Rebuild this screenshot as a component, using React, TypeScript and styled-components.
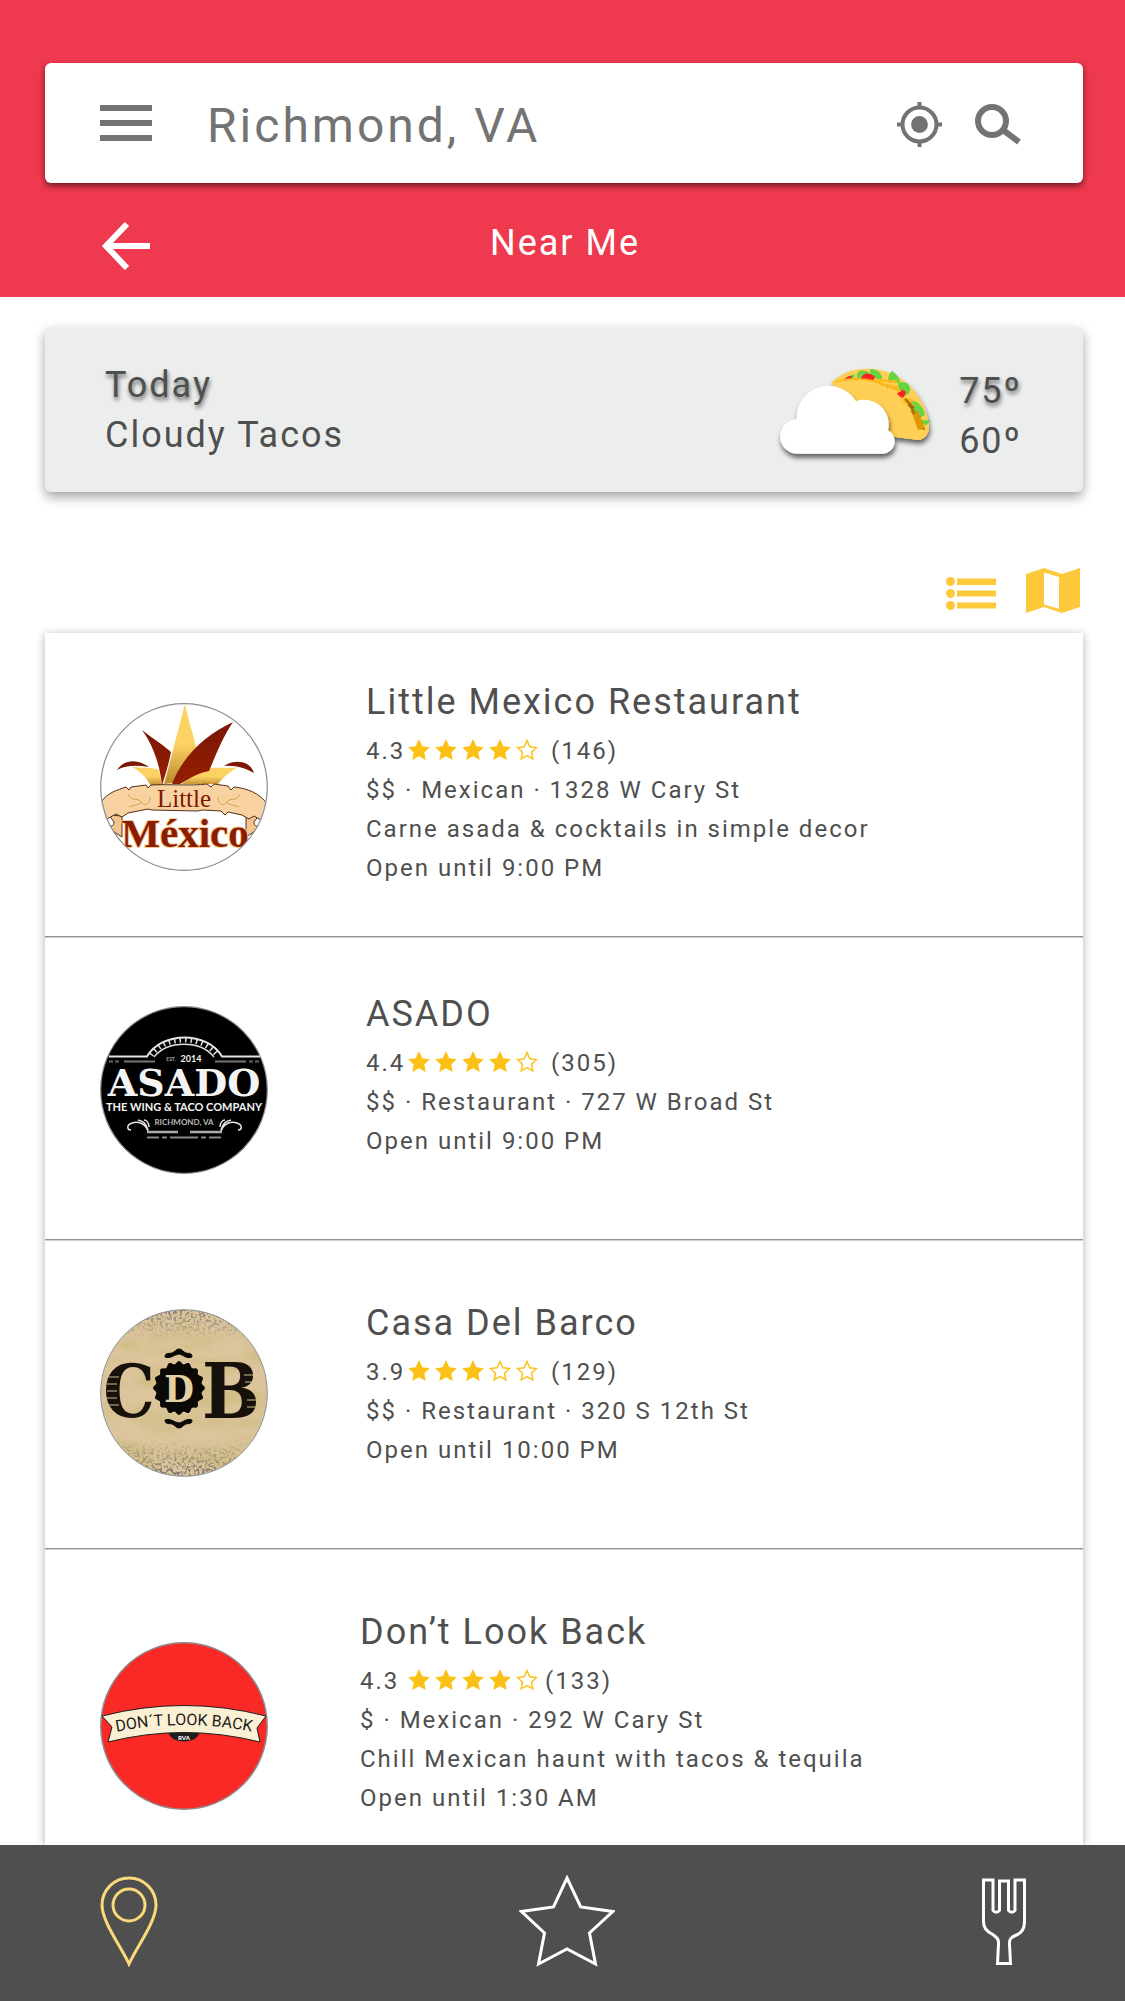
import React from "react";
import styled, { createGlobalStyle } from "styled-components";

const GlobalStyle = createGlobalStyle`
  *, *::before, *::after { box-sizing: border-box; }
  body {
    margin: 0;
    background: #ffffff;
    color: #4f4f4f;
    font-family: Roboto, "Noto Sans", sans-serif;
    letter-spacing: 2px;
  }
  h1, h2, p, ul { margin: 0; padding: 0; font-weight: 400; }
  ul { list-style: none; }
  svg { display: block; }
`;

const Screen = styled.div`
  display: flex;
  flex-direction: column;
  min-height: 100vh;
`;

const Header = styled.header`
  background: #ef394e;
  padding: 63px 42px 0 45px;
`;

const SearchBar = styled.form`
  display: flex;
  align-items: center;
  height: 120px;
  padding: 0 62px 0 55px;
  background: #ffffff;
  border-radius: 6px;
  box-shadow: 0 3px 6px rgba(0, 0, 0, 0.55);
  color: #737373;
`;

const SearchField = styled.input`
  flex: 1;
  min-width: 0;
  margin: 0 24px 0 55px;
  padding: 4px 0 0;
  border: 0;
  outline: 0;
  background: transparent;
  color: inherit;
  font-family: inherit;
  font-size: 48px;
  letter-spacing: 3px;
`;

const IconButton = styled.button`
  flex: none;
  padding: 0;
  border: 0;
  background: none;
  color: inherit;
  cursor: pointer;
`;

const SearchTools = styled.div`
  display: flex;
  align-items: center;
  gap: 33px;
  padding-top: 2px;
`;

const TitleRow = styled.div`
  display: grid;
  grid-template-columns: 1fr auto 1fr;
  align-items: center;
  height: 114px;
  padding: 6px 54px 0 56px;
  color: #ffffff;
`;

const BackButton = styled(IconButton)`
  justify-self: start;
`;

const PageTitle = styled.h1`
  font-size: 36px;
  line-height: 48px;
`;

const Main = styled.main`
  flex: 1;
  display: flex;
  flex-direction: column;
  padding: 30px 42px 0 45px;
`;

const Weather = styled.section`
  display: flex;
  align-items: center;
  justify-content: space-between;
  height: 165px;
  padding: 0 61px 0 60px;
  background: #eceeed;
  border-radius: 6px;
  box-shadow: 0 5px 12px rgba(0, 0, 0, 0.36);
  font-size: 36px;
  line-height: 50px;
`;

const Forecast = styled.div`
  display: flex;
  align-items: center;
  gap: 23px;
  padding-top: 12px;
`;

const Raised = styled.p`
  text-shadow: 1px 3px 4px rgba(0, 0, 0, 0.55);
`;

const ViewSwitch = styled.div`
  display: flex;
  justify-content: flex-end;
  align-items: center;
  gap: 30px;
  padding: 76px 3px 20px 0;
  color: #fcc93a;
`;

const List = styled.ul`
  flex: 1;
  background: #ffffff;
  box-shadow: 0 2px 9px rgba(0, 0, 0, 0.32);
`;

const Place = styled.li<{ $height: number }>`
  display: flex;
  align-items: flex-start;
  min-height: ${(p) => p.$height}px;
  padding: 0 55px;

  &:not(:last-child) {
    border-bottom: 1px solid #939393;
    box-shadow: 0 1px 0 #cfcfcf;
  }
`;

const Logo = styled.div<{ $top: number }>`
  flex: none;
  padding-top: ${(p) => p.$top}px;
`;

const Info = styled.div<{ $top: number; $indent: number }>`
  padding: ${(p) => p.$top}px 0 0 ${(p) => p.$indent}px;
  font-size: 24px;
  line-height: 39px;
`;

const Name = styled.h2`
  margin-bottom: 6px;
  font-size: 36px;
  line-height: 48px;
`;

const Rating = styled.div`
  display: flex;
  align-items: center;
`;

const Score = styled.span<{ $width: number }>`
  width: ${(p) => p.$width}px;
`;

const Stars = styled.span<{ $after: number }>`
  display: flex;
  gap: 5px;
  margin-right: ${(p) => p.$after}px;
`;

const BottomNav = styled.nav`
  position: relative;
  display: flex;
  align-items: center;
  justify-content: space-between;
  height: 156px;
  padding: 0 96px 4px 100px;
  background: #4f4f4f;
`;

const NavLink = styled.a<{ $active?: boolean }>`
  color: ${(p) => (p.$active ? "#fbd978" : "#ffffff")};
`;

const MenuIcon = () => (
  <svg width="52" height="36" viewBox="0 0 52 36" fill="currentColor">
    <path d="M0 0h52v6H0zM0 15h52v6H0zM0 30h52v6H0z" />
  </svg>
);

const LocateIcon = () => (
  <svg width="45" height="45" viewBox="0 0 45 45" fill="none" stroke="currentColor" strokeWidth="4">
    <circle cx="22.5" cy="22.5" r="17" />
    <circle cx="22.5" cy="22.5" r="8.4" fill="currentColor" stroke="none" />
    <path d="M22.5 0v6M22.5 39v6M0 22.5h6M39 22.5h6" />
  </svg>
);

const SearchIcon = () => (
  <svg width="46" height="42" viewBox="0 0 46 42" fill="none" stroke="currentColor" strokeWidth="6">
    <circle cx="17" cy="18" r="14" />
    <path d="M28 27l16 12" />
  </svg>
);

const BackIcon = () => (
  <svg width="50" height="54" viewBox="0 0 50 54" fill="none" stroke="currentColor" strokeWidth="6">
    <path d="M26 8L5 30l21 22M6 30h43" />
  </svg>
);

const ListIcon = () => (
  <svg width="50" height="45" viewBox="0 0 50 45" fill="currentColor">
    <circle cx="4.5" cy="13.500" r="4.5" />
    <circle cx="4.5" cy="25.500" r="4.5" />
    <circle cx="4.5" cy="37.500" r="4.5" />
    <path d="M11 10.500h39v6.600H11zM11 22.500h39v6H11zM11 34.500h39v6H11z" />
  </svg>
);

const MapIcon = () => (
  <svg width="54" height="45" viewBox="0 0 54 45" fill="currentColor" fillRule="evenodd">
    <path d="M0 6L18 0l18 6L54 0v39l-18 6-18-6-18 6zM18 4.500v32l15 4.300V9z" />
  </svg>
);

const starPath = "M11 0l3.300 7.300 7.500.9-5.500 5.300 1.400 7.500L11 17.200 4.300 21l1.400-7.500L.2 8.200l7.500-.9z";

const StarIcon = ({ filled }: { filled: boolean }) => (
  <svg width="22" height="25" viewBox="0 0 22 25">
    {filled ? (
      <path d={starPath} fill="#fcc117" />
    ) : (
      <path
        d="M11 1.500l2.800 6.200 6.700.8-5 4.700 1.300 6.700L11 16.600l-5.800 3.300 1.300-6.700-5-4.700 6.700-.8z"
        fill="none"
        stroke="#fcc117"
        strokeWidth="1.500"
      />
    )}
  </svg>
);

const TacoIcon = () => (
  <svg width="160" height="106" viewBox="0 0 160 106" role="img" aria-label="Cloud and taco">
    <defs>
      <filter id="lift" x="-20%" y="-20%" width="140%" height="150%">
        <feDropShadow dx="1" dy="4" stdDeviation="2.500" floodColor="#000" floodOpacity="0.6" />
      </filter>
    </defs>
    <g filter="url(#lift)">
      <path
        d="M55 20C66 9 80 5 94 5.800c20 1.200 38 11 48 27 7 11 10 21 11 30 .5 7-4 14-11 14L112 73z"
        fill="#ffcf55"
      />
    </g>
    <path
      d="M68 17c2-5 7-4 11-6l-1 5zM81 15c-1-8 4-9 12-6l-2 6zM94 6c8 0 13 5 12 11l-12-3zM111 19c2-4 1-8 5-11 6 4 8 8 8 12zM122 20c9-3 13 3 12 7-1 5-5 7-11 5zM132 37c8 0 15 5 17 15l-9 5zM143 57l12 .500-5 5z"
      fill="#68d444"
    />
    <path d="M68 18c2-5 6-5 8-5l-1 4zM85 16c2-8 10-6 14-2l-2 4zM109 21l4 1-1 3zM121 31c2-4 7-5 9-2l-3 7z" fill="#ff2222" />
    <path d="M58 20C72 14 94 15 109 22" stroke="#fcb716" strokeWidth="2" fill="none" />
    <path
      d="M99 18c8-3 12 2 22 0M103 21c8 0 11 4 20 3M113 22c4 6 8 1 11 7M126 35l11 3-8 1 9 4"
      stroke="#fbb91b"
      strokeWidth="2.500"
      fill="none"
    />
    <path
      d="M57 20c22-6 45-3 62 12 13 12 21 25 23 35 3 0 7-1 9-4 3 6-2 14-9 14L108 73z"
      fill="#ffcf55"
    />
    <path d="M129 36l9 9M132 41l6 7" stroke="#a8690c" strokeWidth="2" />
    <path d="M136 50l6-2 7 17-7 2z" fill="#dc9a00" />
    <path d="M144 66l5-1v2zM134 47l3 5 4-3" fill="#b9760a" />
    <g filter="url(#lift)">
      <path
        d="M22 90.700A17.200 17.200 0 0 1 20.700 56.300 32 32 0 0 1 80 38.200 24.600 24.600 0 0 1 112 67.300 12.400 12.400 0 0 1 107 90.700z"
        fill="#fff"
      />
    </g>
  </svg>
);

const PinIcon = () => (
  <svg width="58" height="92" viewBox="0 0 58 92" fill="none" stroke="currentColor" strokeWidth="3">
    <path d="M29 89C22 73 2 47 2 30a27 27 0 0 1 54 0c0 17-20 43-27 59z" />
    <circle cx="29" cy="30" r="16" />
  </svg>
);

const FavouriteIcon = () => (
  <svg width="96" height="92" viewBox="0 0 96 92" fill="none" stroke="currentColor" strokeWidth="3">
    <path d="M48 3l13.700 29 32 4.500L70.500 58l6 31L48 74 19.500 89l6-31L2.500 36.500l32-4.500z" />
  </svg>
);

const ForkIcon = () => (
  <svg width="54" height="92" viewBox="-4 0 54 92" fill="none" stroke="currentColor" strokeWidth="3">
    <path d="M4.500 5h9.500V35.500a4 4 0 0 0 6.500 0V6h9V35.500a4 4 0 0 0 6.500 0V5h9.500V47c0 7-3 11-8 13-5 2-7.500 4-7 9l1 19.500h-13L19.500 69c.5-5-2-7-6.500-10-6-3-8.500-7-8.500-12z" />
  </svg>
);

const LittleMexicoLogo = () => (
  <svg width="168" height="168" viewBox="0 0 168 168" role="img" aria-label="Little México">
    <defs>
      <clipPath id="lm-clip"><circle cx="84" cy="84" r="83" /></clipPath>
      <linearGradient id="lm-gold" x1="0" y1="0" x2="0" y2="1">
        <stop offset="0.500" stopColor="#fdd264" />
        <stop offset="1" stopColor="#b98a2c" />
      </linearGradient>
      <linearGradient id="lm-red" x1="0" y1="0" x2="0" y2="1">
        <stop offset="0" stopColor="#7a1606" />
        <stop offset="1" stopColor="#971f00" />
      </linearGradient>
    </defs>
    <circle cx="84" cy="84" r="83" fill="#fff" />
    <g clipPath="url(#lm-clip)">
      <path d="M32 64c10 1 20 0 27 3l3 16H51C46 74 40 68 32 64zM82 81c8-9 17-14 28-16 9-1 19 1 28-1-8 5-15 10-20 17z" fill="url(#lm-gold)" />
      <path d="M85 1c3 16 9 32 12 47L73 80l-9 1C72 52 78 27 85 1z" fill="url(#lm-gold)" />
      <path d="M42 27c10 8 20 14 29 22-2 12-6 23-9 34C60 62 53 42 42 27zM133 19C122 35 116 52 109 68c-12 2-22 9-29 13h-8C83 52 107 31 133 19z" fill="url(#lm-red)" />
      <path d="M17 67c8-12 22-10 32-3-12-2-23-2-32 3zM124 63c10-7 26-6 30 7-9-5-18-8-30-7z" fill="#7d1705" />
      <path d="M9 112l13 1v21l-14-9c3-3 6-1 6-6zM159 112l-13 1v21l14-9c-3-3-6-1-6-6z" fill="#f3c48b" stroke="#53301a" />
      <path
        d="M1 99C8 89 18 87 26 84l3 3 2-3 15-2 2 3 3-3c22-1 38 1 56-1l4 3 3-3 14 2 3 4 3-3c13 1 27 7 33 17l-6 16-7-4-5 3-7-4-14-3-3 3-4-4-18-1-6 1-45-1-4-1-20 4-6 4-6-3-9 5z"
        fill="#f8d2a0"
        stroke="#53301a"
      />
      <path d="M28 91c4 9 10 2 14 9 4 5 9-2 8-6M29 104c5-2 9-2 12-4M140 91c-4 9-10 2-14 9-4 5-9-2-8-6M139 104c-5-2-9-2-12-4" fill="none" stroke="#d7a14a" />
      <text x="84" y="104" textAnchor="middle" fontFamily="Liberation Serif, serif" fontSize="25" letterSpacing="0" fill="#7d1705">Little</text>
      <text
        x="85" y="144" textAnchor="middle" fontFamily="Liberation Serif, serif" fontSize="41" fontWeight="700" letterSpacing="0"
        fill="#8b1c04" stroke="#f5c98f" strokeWidth="2" paintOrder="stroke"
      >México</text>
    </g>
    <circle cx="84" cy="84" r="83.300" fill="none" stroke="#8c8c8c" strokeWidth="1.200" />
  </svg>
);

const AsadoLogo = () => (
  <svg width="168" height="168" viewBox="0 0 168 168" role="img" aria-label="Asado, the wing and taco company">
    <circle cx="84" cy="84" r="83.300" fill="#000" stroke="#8c8c8c" strokeWidth="1.200" />
    <g fill="none" stroke="#e4e4e4">
      <path d="M9 50.500h38C62 25 107 25 122 50.500h38" strokeWidth="2" />
      <path d="M54 51C68 34 100 34 114 51" strokeWidth="1.500" />
      <path d="M51 49C66 29 102 29 117 49" strokeWidth="5" strokeDasharray="1.500 4" />
      <path d="M24 55.500h31M115 55.500h31" strokeWidth="2" stroke="#777" />
      <path d="M9 55.500h12M149 55.500h10" strokeWidth="2" stroke="#666" strokeDasharray="4 2" />
      <path d="M47 126h31M90 126h32" strokeWidth="2.500" stroke="#aaa" />
      <path d="M47 131.500h12M70 131.500h28M109 131.500h12M62 131.500h5M101 131.500h5" strokeWidth="2" stroke="#888" />
      <path d="M48 125c-3-8-10-10-16-8-6 2-5 7-1 7M48 124c-2-7-5-9-10-10M49 121c0-5-3-7-5-7M121 125c3-8 10-10 16-8 6 2 5 7 1 7M121 124c2-7 5-9 10-10M120 121c0-5 3-7 5-7" strokeWidth="1.500" />
    </g>
    <g fill="#f4f4f4" textAnchor="middle" fontWeight="700" letterSpacing="0">
      <text x="71" y="55" fontFamily="Lato, sans-serif" fontSize="5" fill="#aaa">EST.</text>
      <text x="91" y="56" fontFamily="Lato, sans-serif" fontSize="9">2014</text>
      <text x="84" y="90" fontFamily="DejaVu Serif, serif" fontSize="38">ASADO</text>
      <text x="84" y="105" fontFamily="Lato, sans-serif" fontSize="11">THE WING &amp; TACO COMPANY</text>
      <text x="84" y="119" fontFamily="Lato, sans-serif" fontSize="8" fill="#bbb">RICHMOND, VA</text>
    </g>
  </svg>
);

const badgeEdge = Array.from({ length: 96 }, (_, i) => {
  const a = (i / 96) * Math.PI * 2;
  const r = 24.5 + 1.5 * Math.cos(a * 16);
  return `${(79 + r * Math.cos(a)).toFixed(1)},${(79 + (r + 1) * Math.sin(a)).toFixed(1)}`;
}).join(" ");

const CasaLogo = () => (
  <svg width="168" height="168" viewBox="0 0 168 168" role="img" aria-label="Casa Del Barco">
    <defs>
      <clipPath id="cdb-clip"><circle cx="84" cy="84" r="83" /></clipPath>
      <filter id="cdb-paper" x="0" y="0" width="100%" height="100%">
        <feTurbulence type="fractalNoise" baseFrequency="0.020 0.050" numOctaves="4" seed="4" />
        <feColorMatrix values="0 0 0 0 0.620  0 0 0 0 0.500  0 0 0 0 0.220  3 0 0 0 -1.150" />
      </filter>
      <filter id="cdb-grit" x="0" y="0" width="100%" height="100%">
        <feTurbulence type="fractalNoise" baseFrequency="0.350" numOctaves="3" seed="9" />
        <feColorMatrix values="0 0 0 0 0.220  0 0 0 0 0.200  0 0 0 0 0.180  0 8 0 0 -3.900" />
      </filter>
      <linearGradient id="cdb-fade" x1="0" y1="0" x2="0" y2="1">
        <stop offset="0" stopColor="#fff" />
        <stop offset="0.180" stopColor="#000" />
        <stop offset="0.780" stopColor="#000" />
        <stop offset="0.970" stopColor="#fff" />
      </linearGradient>
      <mask id="cdb-mask"><rect width="168" height="168" fill="url(#cdb-fade)" /></mask>
    </defs>
    <g clipPath="url(#cdb-clip)">
      <rect width="168" height="168" fill="#dcc59c" />
      <rect width="168" height="168" filter="url(#cdb-paper)" opacity="0.700" />
      <g mask="url(#cdb-mask)"><rect width="168" height="168" filter="url(#cdb-grit)" /></g>
    </g>
    <polygon points={badgeEdge} fill="#0b0905" />
    <path
      d="M65 48c0-5 5-3 7-4 3-1 4-4 7-4s4 3 7 4c2 1 6-1 6 4-6 2-8-2-13-3-6 1-8 5-14 3zM65 111c0 5 5 3 7 4 3 1 4 4 7 4s4-3 7-4c2-1 6 1 6-4-6-2-8 2-13 3-6-1-8-5-14-3z"
      fill="#0b0905"
      stroke="#0b0905"
    />
    <g fontFamily="DejaVu Serif Condensed, DejaVu Serif, serif" fontWeight="700" textAnchor="middle" letterSpacing="0">
      <text x="29" y="108" fontSize="72" fill="#16110a">C</text>
      <text x="131" y="109" fontSize="76" fill="#16110a">B</text>
      <text x="79" y="93" fontSize="38" fill="#e3cfa4">D</text>
    </g>
    <path d="M9 68h10M7 75h10M7 82h10M7 89h10M9 96h10M144 66h9M145 73h7M147 91h9M147 98h9" stroke="#d2bb8b" strokeWidth="1.200" />
    <circle cx="84" cy="84" r="83.300" fill="none" stroke="#8c8c8c" />
  </svg>
);

const DontLookBackLogo = () => (
  <svg width="168" height="168" viewBox="0 0 168 168" role="img" aria-label="Don't Look Back RVA">
    <defs><path id="dlb-arc" d="M10 91Q84 75 158 91" /></defs>
    <circle cx="84" cy="84" r="83.200" fill="#f92a25" stroke="#8c8c8c" strokeWidth="1.500" />
    <path d="M68 89h32c-2 14-30 14-32 0z" fill="#1d1d1b" />
    <path d="M2 74q82-21 164 0l-9 12 3 14q-76-19-152 0l4-15z" fill="#fbf0d4" stroke="#1d1d1b" />
    <text fontFamily="Roboto, sans-serif" fontSize="16" letterSpacing="0" fill="#1d1d1b">
      <textPath href="#dlb-arc" startOffset="50%" textAnchor="middle">DON´T LOOK BACK</textPath>
    </text>
    <text x="84" y="98" textAnchor="middle" fontFamily="Lato, sans-serif" fontSize="6" fontWeight="900" letterSpacing="0" fill="#fff">RVA</text>
  </svg>
);

interface PlaceData {
  name: string;
  score: string;
  stars: number;
  reviews: number;
  lines: string[];
  logo: React.ReactNode;
  height: number;
  logoTop: number;
  textTop: number;
  indent: number;
  scoreWidth: number;
  ratingGap: number;
}

const places: PlaceData[] = [
  {
    name: "Little Mexico Restaurant",
    score: "4.3",
    stars: 4,
    reviews: 146,
    lines: ["$$ · Mexican · 1328 W Cary St", "Carne asada & cocktails in simple decor", "Open until 9:00 PM"],
    logo: <LittleMexicoLogo />,
    height: 304,
    logoTop: 70,
    textTop: 45,
    indent: 98,
    scoreWidth: 42,
    ratingGap: 13,
  },
  {
    name: "ASADO",
    score: "4.4",
    stars: 4,
    reviews: 305,
    lines: ["$$ · Restaurant · 727 W Broad St", "Open until 9:00 PM"],
    logo: <AsadoLogo />,
    height: 303,
    logoTop: 69,
    textTop: 53,
    indent: 98,
    scoreWidth: 42,
    ratingGap: 13,
  },
  {
    name: "Casa Del Barco",
    score: "3.9",
    stars: 3,
    reviews: 129,
    lines: ["$$ · Restaurant · 320 S 12th St", "Open until 10:00 PM"],
    logo: <CasaLogo />,
    height: 309,
    logoTop: 69,
    textTop: 59,
    indent: 98,
    scoreWidth: 42,
    ratingGap: 13,
  },
  {
    name: "Don’t Look Back",
    score: "4.3",
    stars: 4,
    reviews: 133,
    lines: ["$ · Mexican · 292 W Cary St", "Chill Mexican haunt with tacos & tequila", "Open until 1:30 AM"],
    logo: <DontLookBackLogo />,
    height: 290,
    logoTop: 93,
    textTop: 59,
    indent: 92,
    scoreWidth: 48,
    ratingGap: 7,
  },
];

export default function App() {
  return (
    <Screen>
      <GlobalStyle />
      <Header>
        <SearchBar role="search" onSubmit={(e) => e.preventDefault()}>
          <IconButton type="button" aria-label="Menu"><MenuIcon /></IconButton>
          <SearchField type="text" aria-label="Location" defaultValue="Richmond, VA" />
          <SearchTools>
            <IconButton type="button" aria-label="Use my location"><LocateIcon /></IconButton>
            <IconButton type="submit" aria-label="Search"><SearchIcon /></IconButton>
          </SearchTools>
        </SearchBar>
        <TitleRow>
          <BackButton type="button" aria-label="Back"><BackIcon /></BackButton>
          <PageTitle>Near Me</PageTitle>
        </TitleRow>
      </Header>

      <Main>
        <Weather>
          <div>
            <Raised>Today</Raised>
            <p>Cloudy Tacos</p>
          </div>
          <Forecast>
            <TacoIcon />
            <div>
              <Raised>75º</Raised>
              <p>60º</p>
            </div>
          </Forecast>
        </Weather>

        <ViewSwitch>
          <IconButton type="button" aria-label="List view"><ListIcon /></IconButton>
          <IconButton type="button" aria-label="Map view"><MapIcon /></IconButton>
        </ViewSwitch>

        <List>
          {places.map((p) => (
            <Place key={p.name} $height={p.height}>
              <Logo $top={p.logoTop}>{p.logo}</Logo>
              <Info $top={p.textTop} $indent={p.indent}>
                <Name>{p.name}</Name>
                <Rating>
                  <Score $width={p.scoreWidth}>{p.score}</Score>
                  <Stars $after={p.ratingGap} role="img" aria-label={`${p.stars} of 5 stars`}>
                    {[1, 2, 3, 4, 5].map((n) => <StarIcon key={n} filled={n <= p.stars} />)}
                  </Stars>
                  <span>({p.reviews})</span>
                </Rating>
                {p.lines.map((line) => <p key={line}>{line}</p>)}
              </Info>
            </Place>
          ))}
        </List>
      </Main>

      <BottomNav>
        <NavLink href="#near" aria-label="Near me" $active><PinIcon /></NavLink>
        <NavLink href="#favourites" aria-label="Favourites"><FavouriteIcon /></NavLink>
        <NavLink href="#restaurants" aria-label="Restaurants"><ForkIcon /></NavLink>
      </BottomNav>
    </Screen>
  );
}
